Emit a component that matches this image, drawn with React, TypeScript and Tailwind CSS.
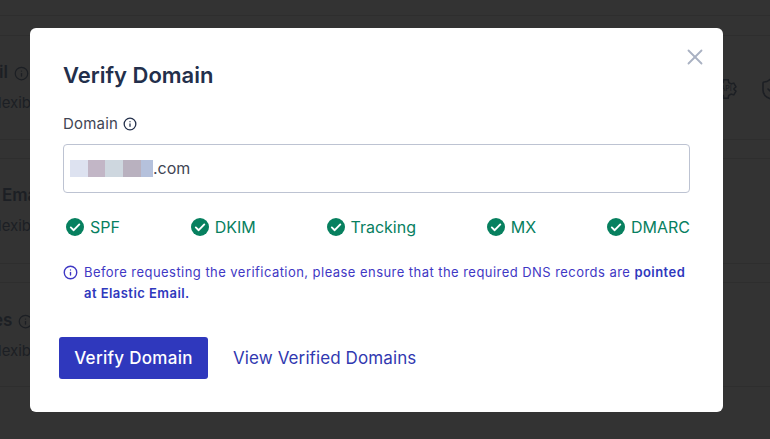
import React from 'react';
import { Info, X, ShieldCheck } from 'lucide-react';

const checks = ['SPF', 'DKIM', 'Tracking', 'MX', 'DMARC'];

const CheckBadge: React.FC = () => (
  <svg width="18" height="18" viewBox="0 0 18 18" className="shrink-0">
    <circle cx="9" cy="9" r="9" fill="#07805f" />
    <path d="M4.8 9.4l2.9 2.8 5.600-5.800" fill="none" stroke="#fff" strokeWidth="1.9" strokeLinecap="round" strokeLinejoin="round" />
  </svg>
);

const ApiGear: React.FC = () => (
  <div className="relative flex h-[22px] w-[22px] shrink-0 items-center justify-center">
    <svg width="22" height="22" viewBox="0 0 24 24" fill="none" stroke="#1c1f24" strokeWidth="1.6" className="absolute inset-0">
      <path d="M9.6 2h4.8l.6 3 2.600 1.500 2.900-1 2.400 4.200-2.300 2v.6l2.300 2-2.400 4.200-2.900-1-2.600 1.500-.6 3H9.600l-.6-3-2.600-1.500-2.900 1-2.400-4.200 2.300-2v-.6l-2.300-2 2.400-4.200 2.900 1L9 5z" />
    </svg>
    <span className="text-[7px] font-medium text-[#1c1f24]">API</span>
  </div>
);

const BackdropRow: React.FC<{ title: string; offset: string; top: string; info?: boolean; icons?: boolean; height: string }> = ({ title, offset, top, info, icons, height }) => (
  <div className={`flex items-start justify-between border-b border-[#2e2e2e] ${height}`}>
    <div className={`w-[30px] overflow-hidden text-[#1c1f24] ${top}`}>
      <div className={`flex h-[22px] items-center gap-[6px] text-[17px] font-semibold whitespace-nowrap ${offset}`}>
        <span>{title}</span>
        {info && <Info size={15} className="shrink-0" />}
      </div>
      <div className="mt-[8px] -ml-[2px] text-[15px] whitespace-nowrap">lexible</div>
    </div>
    {icons && (
      <div className="mt-[41px] flex w-[47px] items-center gap-[22px] overflow-hidden">
        <div className="-ml-[8px]"><ApiGear /></div>
        <ShieldCheck size={24} strokeWidth={1.6} className="shrink-0 text-[#1c1f24]" />
      </div>
    )}
  </div>
);

export default function App() {
  return (
    <div className="relative h-[439px] w-[770px] overflow-hidden bg-[#333333] font-['Inter','Open_Sans',sans-serif]">
      <div className="h-[16px] border-b border-[#2e2e2e]" />
      <div className="h-[20px] border-b border-[#2e2e2e]" />
      <BackdropRow title="il" offset="-ml-[1px]" top="pt-[26px]" info icons height="h-[104px]" />
      <div className="h-[19px] border-b border-[#2e2e2e]" />
      <BackdropRow title="Email" offset="ml-[2px]" top="pt-[26px]" height="h-[105px]" />
      <div className="h-[19px] border-b border-[#2e2e2e]" />
      <BackdropRow title="es" offset="-ml-[7px]" top="pt-[27px]" info height="h-[104px]" />

      <div className="absolute inset-0 pt-[28px] pl-[30px]">
        <div className="relative h-[384px] w-[693px] rounded-[6px] bg-white pt-[33px] pl-[33px]">
          <button className="absolute top-[16px] right-[15px] text-[#a9b1c2]">
            <X size={26} strokeWidth={1.7} />
          </button>

          <h2 className="text-[22px] leading-[28px] font-semibold text-[#232f4b]">Verify Domain</h2>

          <div className="mt-[25px] flex h-[20px] items-center gap-[5px] text-[15px] tracking-[0.2px] text-[#3f4554]">
            <span>Domain</span>
            <Info size={14} strokeWidth={2.2} className="text-[#232f4b]" />
          </div>

          <div className="mt-[10px] flex h-[49px] w-[627px] items-center rounded-[4px] border border-[#bdc3d2] pl-[6px] text-[16px] text-[#3f4554]">
            <div className="flex h-[17px]">
              <div className="w-[18px] bg-[#dde2f0]" />
              <div className="w-[17px] bg-[#c2b6c6]" />
              <div className="w-[18px] bg-[#ced7df]" />
              <div className="w-[18px] bg-[#b9b1bf]" />
              <div className="w-[12px] bg-[#b5c1dc]" />
            </div>
            <span className="-mt-[1px]">.com</span>
          </div>

          <div className="mt-[24px] flex h-[20px] w-[627px] items-center justify-between pl-[3px] text-[16px] text-[#07805f]">
            {checks.map((c) => (
              <div key={c} className="flex items-center gap-[6px]">
                <CheckBadge />
                <span>{c}</span>
              </div>
            ))}
          </div>

          <div className="mt-[25px] flex w-[627px] gap-[6px] text-[13px] leading-[21px] tracking-[0.45px] text-[#3f38c4]">
            <Info size={15} strokeWidth={2.2} className="mt-[3px] shrink-0" />
            <p>
              Before requesting the verification, please ensure that the required DNS records are{' '}
              <span className="font-semibold text-[#2f38bd]">pointed at Elastic Email.</span>
            </p>
          </div>

          <div className="mt-[33px] -ml-[4px] flex items-center gap-[25px]">
            <button className="h-[42px] w-[149px] rounded-[3px] bg-[#2f38bd] pt-[1px] text-[17px] font-medium tracking-[0.3px] text-white">Verify Domain</button>
            <a className="pt-[2px] text-[17px] tracking-[0.1px] text-[#3138b0]">View Verified Domains</a>
          </div>
        </div>
      </div>
    </div>
  );
}
